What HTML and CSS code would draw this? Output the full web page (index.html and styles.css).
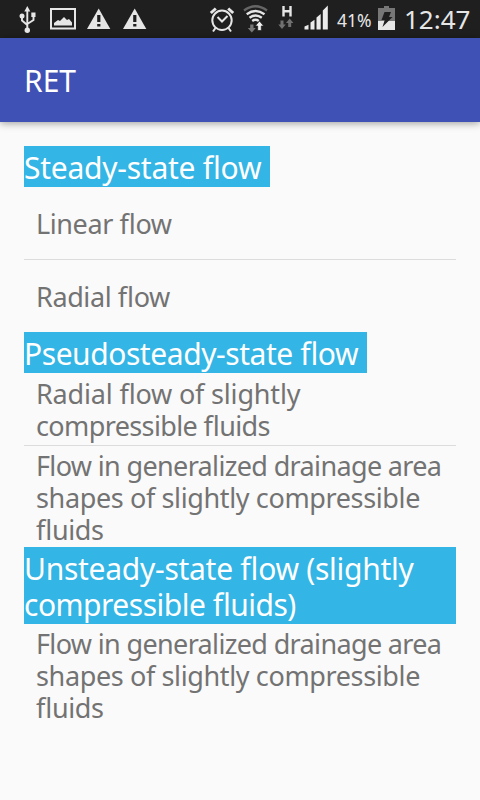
FILE: index.html
```
<!DOCTYPE html>
<html lang="en">
<head>
	<meta charset="utf-8">
	<title>RET</title>
	<link rel="stylesheet" href="styles.css">
</head>
<body>
	<div class="status">
		<!-- notifications, signal and battery -->
		<svg class="icons" width="334" height="38" viewBox="0 0 334 38">
			<g fill="none" stroke="#e6e6e6" stroke-width="1.9">
				<path d="M27.300 10v20M22 17v3.500l5.300 4.500M33.500 16v4l-6.200 4"/>
			</g>
			<g fill="#e6e6e6">
				<path d="M27.300 6l3 5.500h-6z"/>
				<circle cx="27.300" cy="30.300" r="2.700"/>
				<circle cx="22" cy="16" r="2.500"/>
				<path d="M31.300 12.500h4.200v4.500h-4.200z"/>
				<path d="M54 25.500v-2.500l4-3 2 1 4-4 3 3 2-1 3 3.500v3z"/>
				<path d="M98.700 8.500L110.300 29H87z"/>
				<path d="M134.700 8.500L146.300 29H123z"/>
			</g>
			<path d="M51 9h24v19.500H51z" fill="none" stroke="#e6e6e6" stroke-width="2"/>
			<path d="M97.200 15h3.200v7h-3.200zM97.200 24h3.200v2.500h-3.200zM133.200 15h3.200v7h-3.200zM133.200 24h3.200v2.500h-3.200z" fill="#1f1f1f"/>
			<!-- alarm -->
			<g fill="none" stroke="#e6e6e6" stroke-width="2">
				<circle cx="222" cy="20.300" r="9.700"/>
				<path d="M217.500 17l4.500 4.500 5.500-5.500"/>
				<path d="M210.800 13l5-4.500M233.200 13l-5-4.500" stroke-width="3"/>
				<path d="M215.500 28l-2.500 3.500M228.500 28l2.500 3.500"/>
			</g>
			<!-- wifi -->
			<g fill="none" stroke="#e6e6e6" stroke-width="2.300">
				<path d="M244 10.500q11.500-8.500 23 0" stroke="#666"/>
				<path d="M246.700 14.200q9-6.500 17.800 0M249.500 17.800q6.200-4.500 12.300 0M252.200 21q3.300-2.400 6.600 0"/>
			</g>
			<path d="M250.200 24.500h3.300v3.500h2.300l-4 4.500-4-4.500h2.400z" fill="#777"/>
			<path d="M257.700 30.500V26h-2.400l4.200-5 4.200 5h-2.400v4.500z" fill="#f2f2f2" stroke="#1f1f1f" stroke-width=".7"/>
			<!-- mobile data -->
			<path d="M283.500 6v10.500M290.500 6v10.500M283.500 11.200h7" fill="none" stroke="#e6e6e6" stroke-width="2.400"/>
			<path d="M280.500 20.500h3v4h2.200l-3.700 4.500-3.700-4.500h2.200zM288.200 27v-4H286l3.700-4.500 3.700 4.500h-2.200v4z" fill="#707070"/>
			<path d="M304.500 29.500v-3l4-1.800v4.800zM310.500 29.500v-7l4-2.800v9.800zM316.500 29.500V17.500l4.200-3.500v15.500zM322.800 29.500V10.500l5-5v24z" fill="#ececec"/>
		</svg>
		<span class="percent">41%</span>
		<svg class="battery" width="18" height="38" viewBox="0 0 18 38">
			<path d="M6 6h5v2h6v13H0V8h6z" fill="#777"/>
			<path d="M0 21h17v9H0z" fill="#e6e6e6"/>
			<path d="M6.500 12h6.500l-2 5h3.500L4.500 27l2.200-7H3.500z" fill="#1f1f1f"/>
		</svg>
		<span class="clock">12:47</span>
	</div>
	<div class="appbar">RET</div>
	<div class="content">
		<h2>Steady-state flow</h2>
		<ul>
			<li class="short">Linear flow</li>
			<li class="short">Radial flow</li>
		</ul>
		<h2 class="pseudo">Pseudosteady-state flow</h2>
		<ul>
			<li><p class="radial">Radial flow of slightly compressible fluids</p></li>
			<li class="tall">Flow in generalized drainage area shapes of slightly compressible fluids</li>
		</ul>
		<h2 class="unsteady">Unsteady-state flow (slightly compressible fluids)</h2>
		<ul>
			<li class="tall">Flow in generalized drainage area shapes of slightly compressible fluids</li>
		</ul>
	</div>
</body>
</html>
```
FILE: styles.css
```
body {
	margin: 0;
	width: 480px;
	height: 800px;
	overflow: hidden;
	background-color: #fafafa;
	font-family: "Noto Sans", sans-serif;
	font-feature-settings: "liga" 1;
}
.status {
	display: flex;
	height: 38px;
	line-height: 38px;
	background-color: #1f1f1f;
	color: #e6e6e6;
	white-space: nowrap;
}
.icons, .battery {
	flex: none;
}
.percent {
	width: 44px;
	padding: 1px 0 0 3px;
	box-sizing: border-box;
	font-size: 17.5px;
}
.clock {
	padding-left: 8px;
	font-size: 26px;
}
.appbar {
	height: 83px;
	line-height: 84px;
	padding: 1px 0 0 24px;
	background-color: #3f51b5;
	color: #fff;
	font-size: 30px;
	box-shadow: 0 1px 8px rgba(0,0,0,0.4);
}
.content {
	padding: 24px 24px 0;
}
h2 {
	width: fit-content;
	margin: 0;
	padding: 4px 9px 1px 0;
	box-sizing: border-box;
	background-color: #33b5e5;
	color: #fff;
	font-size: 30px;
	font-weight: 400;
	line-height: 36px;
	letter-spacing: -0.25px;
}
.pseudo {
	letter-spacing: -0.44px;
}
.unsteady {
	letter-spacing: -0.5px;
}
.unsteady::first-line {
	letter-spacing: -0.27px;
}
ul {
	margin: 0;
	padding: 0;
	list-style: none;
}
li {
	display: flex;
	align-items: center;
	height: 72px;
	padding: 2px 12px 0;
	box-sizing: border-box;
	color: #737373;
	font-size: 27px;
	line-height: 32px;
	letter-spacing: -0.62px;
}
li + li {
	height: 73px;
	border-top: 1px solid #dcdcdc;
}
.short {
	letter-spacing: -0.4px;
}
li.tall {
	display: block;
	height: auto;
	padding-top: 4px;
	padding-bottom: 1px;
	letter-spacing: -0.37px;
}
.tall::first-line {
	letter-spacing: -0.65px;
}
.radial {
	margin: 0;
	padding-right: 60px;
}
.radial::first-line {
	letter-spacing: -0.18px;
}
```
